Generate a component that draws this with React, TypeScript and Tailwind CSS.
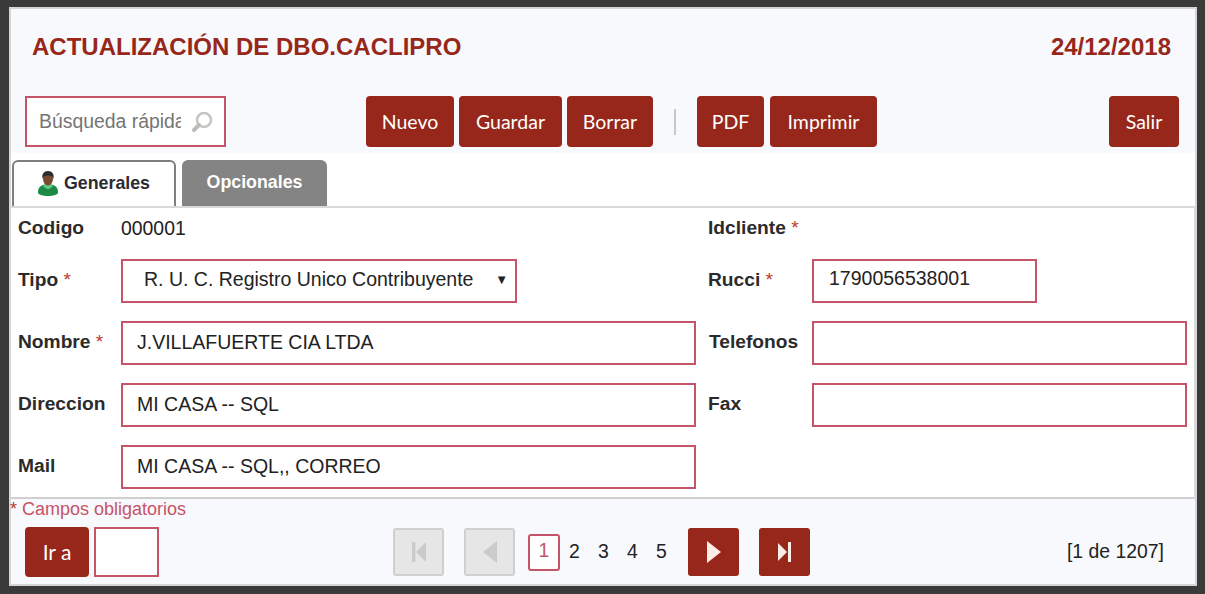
import type { ReactNode } from 'react';

const ARIAL = "font-['Liberation_Sans',Arial,sans-serif]";

const UserIcon = () => (
  <svg viewBox="0 0 20 25" className="w-[20px] h-[25px] flex-shrink-0">
    <path d="M0 22c0-4 1-6 3-7 2-1 3-1.500 5-2h4c2 .5 3 1 5 2 2 1 3 3 3 7-1 2-5 3-10 3S1 24 0 22z" fill="#1c8a45" />
    <path d="M5 15c2 2 3 3 5 3s3-1 5-3l-2-2H7z" fill="#63c98a" />
    <ellipse cx="10" cy="8" rx="5" ry="6.500" fill="#7a4a30" />
    <path d="M4.500 8C3.500 3 6 0 10 0s6.500 3 5.500 8C15 6 14 4.500 10 4.500S5 6 4.500 8z" fill="#2a2a30" />
  </svg>
);

const SearchIcon = () => (
  <svg viewBox="0 0 22 22" className="w-[22px] h-[22px] flex-shrink-0 ml-[10px]">
    <circle cx="13" cy="9" r="7" fill="#fff" stroke="#c4c4c0" strokeWidth="2.500" />
    <path d="M8 14l-5 5" stroke="#bdbdb8" strokeWidth="4" strokeLinecap="round" />
  </svg>
);

const Btn = ({ children, className = '' }: { children: ReactNode; className?: string }) => (
  <button className={`h-[51px] rounded-[4px] bg-[#97271a] text-white text-[19.500px] font-['Lato',sans-serif] font-normal flex items-center justify-center ${className}`}>
    {children}
  </button>
);

const Field = ({ value, className = '' }: { value?: string; className?: string }) => (
  <div className={`h-[44px] border-2 border-[#c45568] bg-white pl-[14px] flex items-center text-[19.500px] text-[#222] ${className}`}>
    {value}
  </div>
);

const Label = ({ text, req, className = '' }: { text: string; req?: boolean; className?: string }) => (
  <div className={`font-bold text-[19.200px] pb-[1px] text-[#2b2b2b] flex-shrink-0 ${className}`}>
    {text}
    {req && <span className="font-normal text-[#c0392b]"> *</span>}
  </div>
);

const PagerBtn = ({ off, children }: { off?: boolean; children: ReactNode }) => (
  <div className={`w-[51px] h-[48px] rounded-[3px] flex items-center justify-center ${off ? 'bg-[#e6e6e6] border-2 border-[#cfcfcf]' : 'bg-[#97271a]'}`}>
    {children}
  </div>
);

export default function App() {
  return (
    <div className={`w-[1205px] h-[594px] bg-[#3a3a3a] pt-[7px] pl-[9px] overflow-hidden ${ARIAL}`}>
      <div className="w-[1188px] h-[579px] border-2 border-[#d6d6d6] bg-white flex flex-col">

        {/* cabecera y botones */}
        <div className="h-[144px] flex-shrink-0 bg-[#f8f9fc]">
          <div className="h-[87px] pl-[21px] pr-[24px] pt-[23px] flex justify-between text-[24px] leading-[30px] font-bold text-[#97271a]">
            <span>ACTUALIZACIÓN DE DBO.CACLIPRO</span>
            <span>24/12/2018</span>
          </div>
          <div className="flex items-center pl-[14px]">
            <div className="w-[201px] h-[51px] border-2 border-[#c45568] bg-white flex items-center pl-[12px] flex-shrink-0">
              <span className="w-[142px] overflow-hidden whitespace-nowrap text-[19.400px] text-[#757575]">Búsqueda rápida</span>
              <SearchIcon />
            </div>
            <div className="flex items-center gap-[5px] ml-[140px]">
              <Btn className="w-[88px]">Nuevo</Btn>
              <Btn className="w-[103px]">Guardar</Btn>
              <Btn className="w-[86px]">Borrar</Btn>
            </div>
            <div className="w-[2px] h-[26px] bg-[#c8c8c8] ml-[21px] mr-[21px]" />
            <div className="flex items-center gap-[6px]">
              <Btn className="w-[67px]">PDF</Btn>
              <Btn className="w-[107px]">Imprimir</Btn>
            </div>
            <Btn className="w-[70px] ml-[232px]">Salir</Btn>
          </div>
        </div>

        {/* pestañas */}
        <div className="h-[53px] flex-shrink-0 flex items-end pl-[1px] gap-[6px]">
          <div className="w-[164px] h-[46px] border-2 border-b-0 border-[#7f7f7f] rounded-t-[6px] bg-white flex items-center justify-center gap-[6px] pb-[2px] text-[17.800px] font-bold text-[#2b2b33]">
            <UserIcon />
            Generales
          </div>
          <div className="w-[145px] h-[46px] rounded-t-[6px] bg-[#848484] flex items-center justify-center pb-[2px] text-[17.800px] font-bold text-white">
            Opcionales
          </div>
        </div>

        {/* formulario */}
        <div className="h-[293px] flex-shrink-0 border-y-2 border-r border-[#d9d9d9] border-b-[#cfcfcf] flex flex-col pl-[7px]">
          <div className="h-[41px] flex items-center">
            <Label text="Codigo" className="w-[103px] pt-[1px]" />
            <span className="text-[19.400px] text-[#222] w-[587px]">000001</span>
            <Label text="Idcliente" req className="pt-[1px]" />
          </div>
          <div className="flex flex-col gap-[18px] mt-[10px]">
            <div className="flex items-center">
              <Label text="Tipo" req className="w-[103px]" />
              <div className="w-[396px] h-[44px] border-2 border-[#c45568] bg-white flex items-center justify-between pl-[21px] pr-[7px] pb-[2px] text-[19.500px] text-[#222]">
                <span>R. U. C. Registro Unico Contribuyente</span>
                <span className="text-[13px] text-[#222]">▼</span>
              </div>
              <Label text="Rucci" req className="w-[104px] ml-[191px]" />
              <Field value="1790056538001" className="w-[225px] pl-[15px] pb-[4px]" />
            </div>
            <div className="flex items-center">
              <Label text="Nombre" req className="w-[103px]" />
              <Field value="J.VILLAFUERTE CIA LTDA" className="w-[575px]" />
              <Label text="Telefonos" className="w-[104px] ml-[12px] pl-[1px]" />
              <Field className="w-[375px]" />
            </div>
            <div className="flex items-center">
              <Label text="Direccion" className="w-[103px]" />
              <Field value="MI CASA -- SQL" className="w-[575px]" />
              <Label text="Fax" className="w-[104px] ml-[12px]" />
              <Field className="w-[375px]" />
            </div>
            <div className="flex items-center">
              <Label text="Mail" className="w-[103px]" />
              <Field value="MI CASA -- SQL,, CORREO" className="w-[575px]" />
            </div>
          </div>
        </div>

        {/* pie */}
        <div className="flex-1 bg-[#f8f9fc]">
          <div className="text-[18px] leading-[20px] -ml-[1px] text-[#c45568]">
            <span className="text-[#c0392b]">*</span> Campos obligatorios
          </div>
          <div className="flex items-center pl-[14px] mt-[8px]">
            <Btn className="w-[64px] !h-[50px] !text-[21px]">Ir a</Btn>
            <div className="w-[65px] h-[50px] ml-[5px] border-2 border-[#c45568] bg-white" />
            <div className="ml-[234px]">
              <PagerBtn off>
                <svg viewBox="0 0 16 22" className="w-[16px] h-[22px]" fill="#cbcbcb"><rect x="1" y="1" width="3.500" height="20" /><path d="M15 1v20L5 11z" /></svg>
              </PagerBtn>
            </div>
            <div className="ml-[20px]">
              <PagerBtn off>
                <svg viewBox="0 0 16 22" className="w-[16px] h-[22px]" fill="#cbcbcb"><path d="M15 0v22L1 11z" /></svg>
              </PagerBtn>
            </div>
            <div className="ml-[13px] w-[32px] h-[37px] rounded-[3px] border-2 border-[#c45568] bg-white flex items-center justify-center pb-[2px] text-[19.400px] text-[#c45568]">1</div>
            <div className="flex text-[19.400px] pb-[1px] text-[#222]">
              <span className="w-[29px] text-center">2</span>
              <span className="w-[29px] text-center">3</span>
              <span className="w-[29px] text-center">4</span>
              <span className="w-[29px] text-center">5</span>
            </div>
            <div className="ml-[12px]">
              <PagerBtn>
                <svg viewBox="0 0 16 22" className="w-[16px] h-[22px]" fill="#fbeee8"><path d="M1 0v22l14-11z" /></svg>
              </PagerBtn>
            </div>
            <div className="ml-[20px]">
              <PagerBtn>
                <svg viewBox="0 0 16 22" className="w-[16px] h-[22px]" fill="#fbeee8"><path d="M1 2v18l9-9z" /><rect x="11" y="1" width="3" height="20" /></svg>
              </PagerBtn>
            </div>
            <span className="ml-auto pr-[31px] text-[19.400px] text-[#222]">[1 de 1207]</span>
          </div>
        </div>
      </div>
    </div>
  );
}
